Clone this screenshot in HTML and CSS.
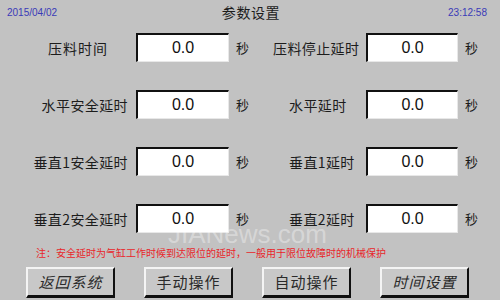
FILE: index.html
```html
<!DOCTYPE html>
<html lang="zh-CN">
<head>
<meta charset="utf-8">
<title>参数设置</title>
<link rel="stylesheet" href="styles.css">
</head>
<body>
<div class="screen">
  <header class="top">
    <span class="date">2015/04/02</span>
    <span class="title">参数设置</span>
    <span class="time">23:12:58</span>
  </header>

  <section class="params">
    <div class="lbl-l lbl-first">压料时间</div>
    <div class="box">0.0</div>
    <div class="unit">秒</div>
    <div class="lbl-r lbl-r-first">压料停止延时</div>
    <div class="box">0.0</div>
    <div class="unit">秒</div>

    <div class="lbl-l">水平安全延时</div>
    <div class="box">0.0</div>
    <div class="unit">秒</div>
    <div class="lbl-r">水平延时</div>
    <div class="box">0.0</div>
    <div class="unit">秒</div>

    <div class="lbl-l">垂直1安全延时</div>
    <div class="box">0.0</div>
    <div class="unit">秒</div>
    <div class="lbl-r">垂直1延时</div>
    <div class="box">0.0</div>
    <div class="unit">秒</div>

    <div class="lbl-l">垂直2安全延时</div>
    <div class="box">0.0</div>
    <div class="unit">秒</div>
    <div class="lbl-r">垂直2延时</div>
    <div class="box">0.0</div>
    <div class="unit">秒</div>
  </section>

  <p class="note">注：安全延时为气缸工作时候到达限位的延时，一般用于限位故障时的机械保护</p>

  <nav class="buttons">
    <div class="btn italic">返回系统</div>
    <div class="btn">手动操作</div>
    <div class="btn">自动操作</div>
    <div class="btn italic">时间设置</div>
  </nav>

  <div class="watermark">JIANews.com</div>
</div>
</body>
</html>
```

FILE: styles.css
```css
html, body {
  margin: 0;
  padding: 0;
}

body {
  width: 500px;
  height: 300px;
  overflow: hidden;
  background: #c2c2c2;
  font-family: "Noto Sans CJK SC", "Liberation Sans", sans-serif;
  color: #1c1c1c;
}

.screen {
  position: relative;
  width: 500px;
  height: 300px;
  display: flex;
  flex-direction: column;
}

.top {
  height: 33px;
  display: grid;
  grid-template-columns: 1fr auto 1fr;
  align-items: start;
}

.date, .time {
  font-family: "Liberation Sans", sans-serif;
  font-size: 10px;
  color: #3a3ab8;
  line-height: 12px;
  padding-top: 7px;
}

.date {
  padding-left: 7px;
}

.time {
  text-align: right;
  padding-right: 13px;
}

.title {
  font-size: 14px;
  letter-spacing: 0.6px;
  line-height: 20px;
  padding-top: 2px;
  padding-left: 2px;
}

.params {
  display: grid;
  grid-template-columns: 136px 93px 21px 116px 92px 1fr;
  grid-auto-rows: 29px;
  row-gap: 28px;
  align-items: center;
}

.lbl-l, .lbl-r {
  font-size: 14px;
  letter-spacing: 0.4px;
  line-height: 20px;
  white-space: nowrap;
}

.lbl-l {
  text-align: right;
  padding-right: 8px;
}

.lbl-first {
  padding-right: 28px;
  letter-spacing: 1px;
}

.lbl-r {
  padding-left: 39px;
}

.lbl-r-first {
  padding-left: 23px;
}

.box {
  height: 29px;
  box-sizing: border-box;
  background: #ffffff;
  border-top: 2px solid #111111;
  border-left: 2px solid #111111;
  border-right: 1px solid #e8e8e8;
  border-bottom: 1px solid #e8e8e8;
  font-family: "Liberation Sans", sans-serif;
  font-size: 16px;
  line-height: 26px;
  text-align: center;
  color: #111111;
}

.unit {
  font-size: 13px;
  padding-left: 7px;
  line-height: 20px;
}

.note {
  margin: 13px 0 0 36px;
  font-size: 10px;
  line-height: 14px;
  letter-spacing: 0;
  color: #e8262a;
  white-space: nowrap;
}

.buttons {
  display: flex;
  gap: 29px;
  padding-left: 26px;
  margin-top: 7px;
}

.btn {
  width: 89px;
  height: 31px;
  box-sizing: border-box;
  background: #c8c8c8;
  border-top: 2px solid #f4f4f4;
  border-left: 2px solid #f4f4f4;
  border-right: 2px solid #101010;
  border-bottom: 3px solid #101010;
  font-size: 15px;
  letter-spacing: 1px;
  line-height: 25px;
  text-align: center;
  color: #2a2a2a;
}

.italic {
  font-style: italic;
}

.watermark {
  position: absolute;
  left: 168px;
  top: 219px;
  font-family: "Liberation Sans", sans-serif;
  font-size: 26px;
  line-height: 30px;
  color: rgba(255, 255, 255, 0.35);
  pointer-events: none;
}
```
